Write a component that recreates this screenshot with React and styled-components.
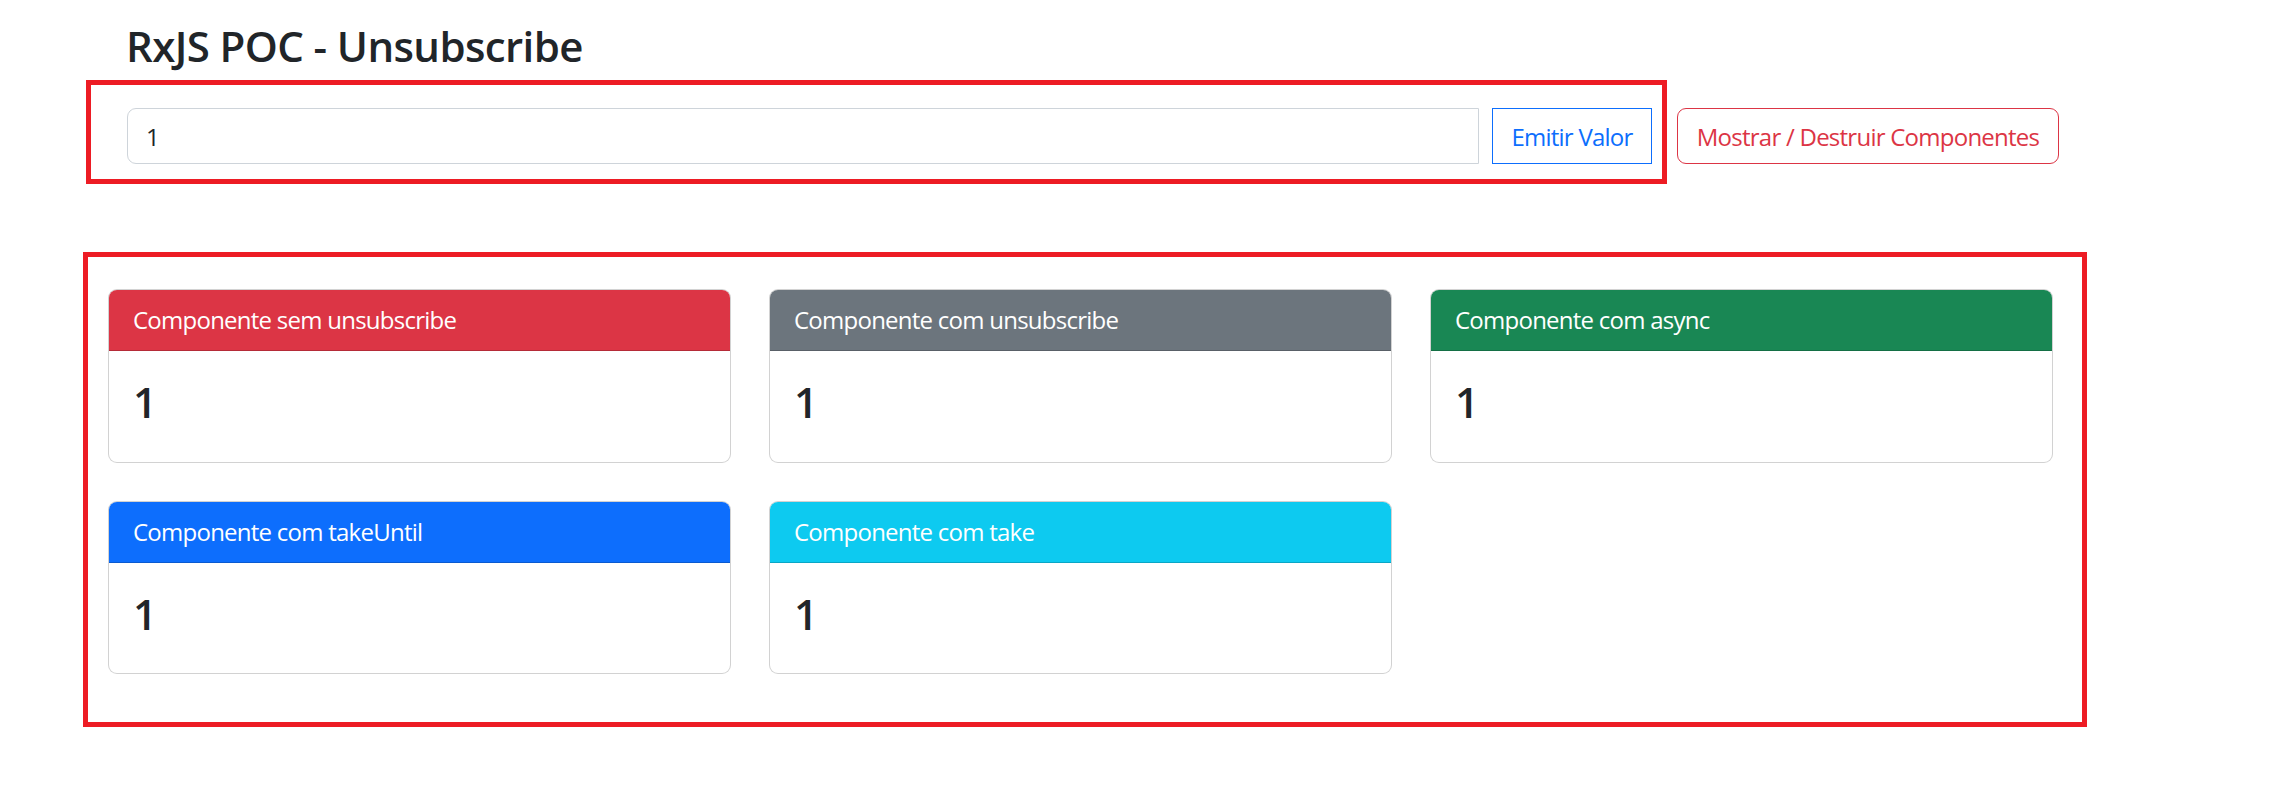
import React from "react";
import styled, { createGlobalStyle } from "styled-components";

const GlobalStyle = createGlobalStyle`
  html, body {
    margin: 0;
    padding: 0;
    background: #ffffff;
  }
  body {
    font-family: "Open Sans", "Noto Sans", Arial, sans-serif;
    color: #212529;
  }
  * { box-sizing: border-box; }
`;

const Page = styled.div`
  position: relative;
  width: 2283px;
  min-height: 787px;
  padding-top: 21px;
`;

const Header = styled.header`
  padding-left: 126px;
`;

const Title = styled.h3`
  margin: 0;
  font-size: 42px;
  font-weight: 600;
  line-height: 1.2;
  letter-spacing: -0.6px;
  color: #212529;
`;

const Controls = styled.div`
  display: flex;
  align-items: stretch;
  margin-top: 37px;
  padding-left: 1px;
  height: 56px;
`;

const ValueInput = styled.input`
  width: 1352px;
  height: 56px;
  padding: 9px 18px;
  font-family: inherit;
  font-size: 24px;
  color: #212529;
  background: #fff;
  border: 1px solid #ced4da;
  border-radius: 9px 0 0 9px;
  outline: none;
`;

const OutlineButton = styled.button`
  height: 56px;
  width: ${(p) => p.$width}px;
  margin-left: ${(p) => p.$gap}px;
  padding: 9px 12px;
  font-family: inherit;
  font-size: 24px;
  letter-spacing: -0.75px;
  color: ${(p) => p.$color};
  background: transparent;
  border: 1px solid ${(p) => p.$color};
  border-radius: ${(p) => p.$radius}px;
  white-space: nowrap;
  cursor: pointer;
`;

const CardGrid = styled.section`
  display: grid;
  grid-template-columns: repeat(3, 623px);
  column-gap: 38px;
  row-gap: 38px;
  margin-top: 125px;
  padding-left: 108px;
`;

const Card = styled.div`
  display: flex;
  flex-direction: column;
  border: 1px solid rgba(0, 0, 0, 0.175);
  border-radius: 9px;
  overflow: hidden;
  background: #fff;
`;

const CardHeader = styled.div`
  padding: 12px 24px;
  font-size: 24px;
  line-height: 36px;
  letter-spacing: -0.75px;
  color: #ffffff;
  background: ${(p) => p.$bg};
  border-bottom: 1px solid rgba(0, 0, 0, 0.175);
`;

const CardBody = styled.div`
  padding: 24px;
`;

const Value = styled.h3`
  margin: 2px 0 10px;
  font-size: 42px;
  font-weight: 600;
  line-height: 1.2;
  color: #212529;
`;

const Annotation = styled.div`
  position: absolute;
  top: ${(p) => p.$top}px;
  left: ${(p) => p.$left}px;
  width: ${(p) => p.$width}px;
  height: ${(p) => p.$height}px;
  border: 5px solid #ed1c24;
  pointer-events: none;
`;

const cards = [
  { title: "Componente sem unsubscribe", bg: "#dc3545" },
  { title: "Componente com unsubscribe", bg: "#6c757d" },
  { title: "Componente com async", bg: "#198754" },
  { title: "Componente com takeUntil", bg: "#0d6efd" },
  { title: "Componente com take", bg: "#0dcaf0" },
];

export default function App() {
  return (
    <>
      <GlobalStyle />
      <Page>
        <Header>
          <Title>RxJS POC - Unsubscribe</Title>
          <Controls>
            <ValueInput defaultValue="1" />
            <OutlineButton $color="#0d6efd" $width={160} $gap={13} $radius={0}>
              Emitir Valor
            </OutlineButton>
            <OutlineButton $color="#dc3545" $width={382} $gap={25} $radius={9}>
              Mostrar / Destruir Componentes
            </OutlineButton>
          </Controls>
        </Header>
        <CardGrid>
          {cards.map((c) => (
            <Card key={c.title}>
              <CardHeader $bg={c.bg}>{c.title}</CardHeader>
              <CardBody>
                <Value>1</Value>
              </CardBody>
            </Card>
          ))}
        </CardGrid>
        <Annotation $top={80} $left={86} $width={1581} $height={104} />
        <Annotation $top={252} $left={83} $width={2004} $height={475} />
      </Page>
    </>
  );
}
